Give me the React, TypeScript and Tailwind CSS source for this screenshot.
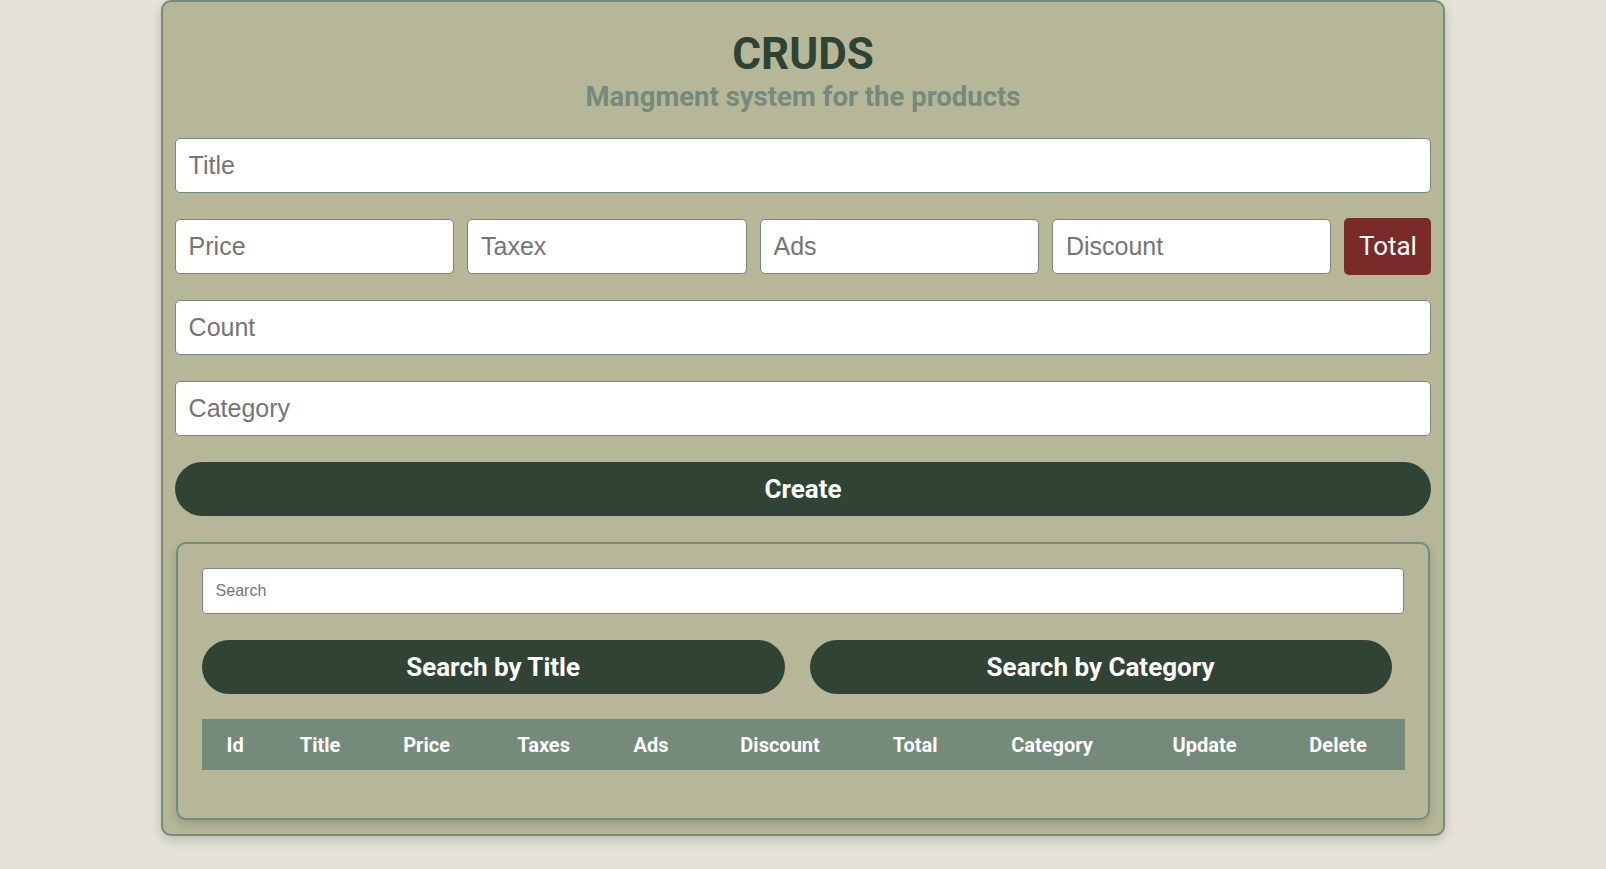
import React from "react";

const inputCls =
  "h-[55px] w-full bg-white border border-[#768a7b] rounded-[5px] px-[13px] text-[25px] text-zinc-800 placeholder:text-[#757575] outline-none font-['Liberation_Sans',Arial,sans-serif]";

const cols: [string, string][] = [
  ["Id", "w-[67px]"],
  ["Title", "w-[103px]"],
  ["Price", "w-[110px]"],
  ["Taxes", "w-[124px]"],
  ["Ads", "w-[91px]"],
  ["Discount", "w-[167px]"],
  ["Total", "w-[103px]"],
  ["Category", "w-[171px]"],
  ["Update", "w-[134px]"],
  ["Delete", "w-[133px]"],
];

export default function App() {
  return (
    <div className="min-h-[869px] bg-[#e5e3d8] font-['Roboto',sans-serif]">
      <div className="mx-auto w-[80%] bg-[#b5b798] border-2 border-[#768a7b] rounded-[10px] shadow-[0_4px_12px_rgba(0,0,0,0.18)] px-[12px] pt-[26px] pb-[14px]">
        <h1 className="text-center text-[44px] leading-[52px] font-bold text-[#2f4335]">CRUDS</h1>
        <p className="mt-[2px] text-center text-[27.5px] leading-[30px] font-bold text-[#768a7b]">Mangment system for the products</p>

        <div className="mt-[26px] flex flex-col gap-[26px]">
          <input className={inputCls} placeholder="Title" />

          <div className="h-[55px] flex items-center gap-[13px]">
            {["Price", "Taxex", "Ads", "Discount"].map(p => (
              <input key={p} className={`${inputCls} flex-1 min-w-0`} placeholder={p} />
            ))}
            <div className="w-[87px] h-[57px] shrink-0 flex items-center justify-center bg-[#7b2a2a] rounded-[5px] text-white text-[26px]">
              Total
            </div>
          </div>

          <input className={inputCls} placeholder="Count" />
          <input className={inputCls} placeholder="Category" />

          <button className="h-[54px] w-full rounded-full bg-[#314335] text-white text-[26px] font-bold">Create</button>

          <div className="mx-[1px] border-2 border-[#768a7b] rounded-[10px] shadow-[0_4px_8px_rgba(0,0,0,0.15)] px-[24px] pt-[24px] pb-[48px]">
            <input
              className="h-[46px] w-full bg-white border border-[#768a7b] rounded-[4px] px-[13px] text-[16px] placeholder:text-[#757575] outline-none font-['Liberation_Sans',Arial,sans-serif]"
              placeholder="Search"
            />
            <div className="mt-[26px] flex gap-[25px]">
              <button className="w-[583px] h-[54px] rounded-full bg-[#314335] text-white text-[26px] font-bold">Search by Title</button>
              <button className="w-[582px] h-[54px] rounded-full bg-[#314335] text-white text-[26px] font-bold">Search by Category</button>
            </div>
            <table className="mt-[25px] w-full table-fixed border-collapse">
              <thead>
                <tr className="bg-[#768a7b] h-[51px]">
                  {cols.map(([h, w]) => (
                    <th key={h} className={`${w} text-center text-white text-[20px] font-bold`}>{h}</th>
                  ))}
                </tr>
              </thead>
              <tbody></tbody>
            </table>
          </div>
        </div>
      </div>
    </div>
  );
}
